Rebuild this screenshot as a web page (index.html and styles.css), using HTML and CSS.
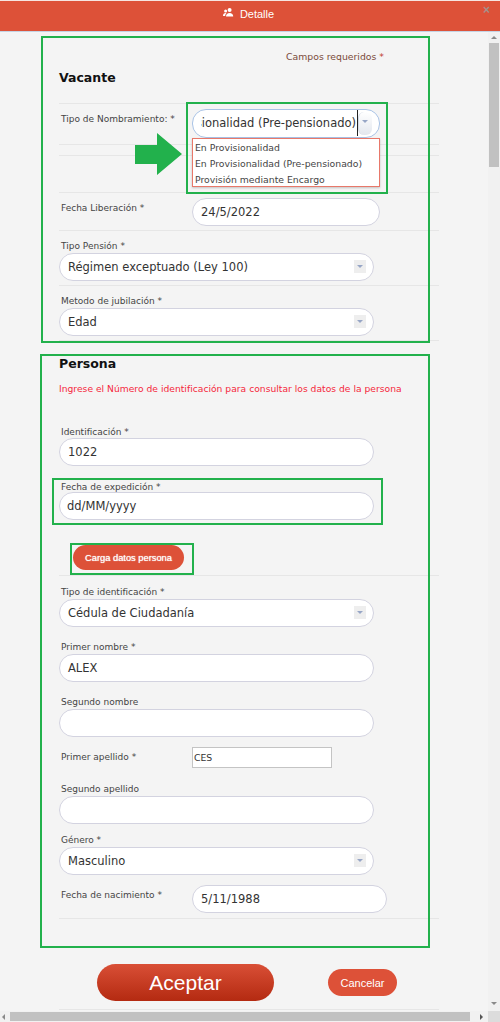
FILE: index.html
```html
<!DOCTYPE html>
<html lang="es">

<head>
    <meta charset="UTF-8">
    <title>Detalle</title>
    <link rel="stylesheet" href="styles.css">
</head>

<body>
    <header class="title-bar">
        <svg class="users-icon" width="12" height="9" viewBox="0 0 12 9">
            <circle cx="6.6" cy="2" r="2" fill="#fff" />
            <path d="M3 8.5c0-2.4 1.4-3.6 3.6-3.6s3.6 1.2 3.6 3.6z" fill="#fff" />
            <circle cx="2.6" cy="3" r="1.5" fill="#fff" />
            <path d="M0 8c0-2 .9-3 2.8-3l.6.2C2.500 6 2.200 7 2.200 8z" fill="#fff" />
        </svg>
        <span>Detalle</span>
        <span class="close-btn">&times;</span>
    </header>

    <div class="body-wrap">
        <main class="content">
            <section class="vacante">
                <p class="required-note">Campos requeridos <span>*</span></p>
                <h3>Vacante</h3>

                <div class="row row-first">
                    <label>Tipo de Nombramiento: *</label>
                    <div class="input input-short select-open">
                        <span class="clip-text"><span>En Provisionalidad (Pre-pensionado)</span></span>
                        <span class="select-btn select-btn-tall"></span>
                    </div>
                </div>
                <div class="row row-blank"></div>
                <div class="row row-hidden"></div>
                <div class="row row-date">
                    <label>Fecha Liberación *</label>
                    <div class="input input-short">24/5/2022</div>
                </div>
                <div class="row row-stack">
                    <label>Tipo Pensión *</label>
                    <div class="input">Régimen exceptuado (Ley 100)<span class="select-btn"></span></div>
                </div>
                <div class="row row-stack">
                    <label>Metodo de jubilación *</label>
                    <div class="input">Edad<span class="select-btn"></span></div>
                </div>
            </section>

            <section class="persona">
                <h3>Persona</h3>
                <p class="warning">Ingrese el Número de identificación para consultar los datos de la persona</p>

                <div class="field field-id">
                    <label>Identificación *</label>
                    <div class="input">1022</div>
                </div>
                <div class="field field-expedicion">
                    <label>Fecha de expedición *</label>
                    <div class="input input-tight">dd/MM/yyyy</div>
                </div>
                <button class="btn-load" type="button">Carga datos persona</button>

                <div class="row row-stack row-tipo">
                    <label>Tipo de identificación *</label>
                    <div class="input">Cédula de Ciudadanía<span class="select-btn"></span></div>
                </div>
                <div class="field">
                    <label>Primer nombre *</label>
                    <div class="input">ALEX</div>
                </div>
                <div class="field">
                    <label>Segundo nombre</label>
                    <div class="input"></div>
                </div>
                <div class="inline-field">
                    <label>Primer apellido *</label>
                    <div class="plain-input">CES</div>
                </div>
                <div class="field field-after-inline">
                    <label>Segundo apellido</label>
                    <div class="input"></div>
                </div>
                <div class="field field-genero">
                    <label>Género *</label>
                    <div class="input">Masculino<span class="select-btn"></span></div>
                </div>
                <div class="inline-field inline-birth">
                    <label>Fecha de nacimiento *</label>
                    <div class="input input-birth">5/11/1988</div>
                </div>
            </section>

            <div class="actions">
                <button class="btn-accept" type="button">Aceptar</button>
                <button class="btn-cancel" type="button">Cancelar</button>
            </div>
            <div class="last-line"></div>
        </main>

        <div class="v-scroll">
            <span class="arrow-up"></span>
            <span class="v-thumb"></span>
            <span class="arrow-down"></span>
        </div>
    </div>

    <div class="h-scroll">
        <span class="arrow-left"></span>
        <span class="h-thumb"></span>
        <span class="arrow-right"></span>
        <span class="corner"></span>
    </div>

    <!-- Dropdown opened over the form -->
    <ul class="dropdown">
        <li>En Provisionalidad</li>
        <li>En Provisionalidad (Pre-pensionado)</li>
        <li>Provisión mediante Encargo</li>
    </ul>

    <!-- Green annotations drawn over the screenshot -->
    <div class="mark mark-vacante"></div>
    <div class="mark mark-select"></div>
    <div class="mark mark-persona"></div>
    <div class="mark mark-fecha"></div>
    <div class="mark mark-load"></div>
    <svg class="mark-arrow" width="48" height="42" viewBox="0 0 48 42">
        <polygon points="0,12 22,12 22,0 47,21 22,42 22,31 0,31" fill="#22b14c" />
    </svg>
</body>

</html>
```

FILE: styles.css
```css
/* Page */
html,
body {
    margin: 0;
    height: 1022px;
    overflow: hidden;
}

body {
    position: relative;
    background-color: #f4f4f4;
    font-family: "DejaVu Sans", sans-serif;
    color: #333;
}

/* Title bar */
.title-bar {
    position: relative;
    height: 25px;
    padding-bottom: 5px;
    border-top: 1px solid #f6e4e0;
    border-bottom: 1px solid #c5d3e4;
    background-color: #dd5138;
    color: #fff;
    font-family: "Liberation Sans", sans-serif;
    font-size: 11px;
    display: flex;
    align-items: center;
    justify-content: center;
    gap: 5px;
}

.users-icon {
    margin-top: -3px;
    margin-left: -3px;
}

.close-btn {
    position: absolute;
    right: 10px;
    top: 2px;
    color: #a58f8a;
    font-size: 12px;
    font-weight: bold;
}

/* Layout */
.body-wrap {
    display: flex;
    height: 979px;
}

.content {
    width: 488px;
    box-sizing: border-box;
    padding-left: 59px;
    overflow: hidden;
}

.vacante,
.persona,
.last-line {
    width: 380px;
}

.vacante {
    border-bottom: 1px solid #e6e6e6;
}

.required-note {
    margin: 0;
    padding: 18px 55px 0 0;
    font-size: 9.300px;
    line-height: 14px;
    text-align: right;
    color: #7a4a3a;
}

.required-note span {
    color: #c0392b;
}

h3 {
    margin: 0;
    font-size: 12.500px;
    line-height: 18px;
    color: #111;
}

.vacante h3 {
    margin-top: 5px;
    margin-bottom: 16px;
}

.persona h3 {
    margin-top: 14px;
}

/* Rows */
.row {
    border-top: 1px solid #e6e6e6;
}

label {
    display: block;
    padding-top: 1px;
    font-size: 9px;
    line-height: 14px;
    color: #444;
}

.row-first {
    height: 40px;
    display: flex;
    padding-left: 2px;
}

.row-first label,
.row-date label {
    width: 131px;
    padding-top: 8px;
    flex: none;
}

.row-first .input {
    margin-top: 5px;
    height: 29px;
}

.row-blank {
    height: 10px;
}

.row-hidden {
    height: 36px;
}

.row-date {
    height: 37px;
    display: flex;
    padding-left: 2px;
}

.row-date .input {
    margin-top: 5px;
}

.row-stack {
    padding: 7px 0 4px;
}

.row-stack label,
.field label {
    padding-left: 2px;
}

.row-tipo {
    padding: 8px 0 0;
}

/* Inputs */
.input {
    position: relative;
    box-sizing: border-box;
    width: 315px;
    height: 28px;
    padding-left: 8px;
    background-color: #fff;
    border: 1px solid #d3d3e0;
    border-radius: 14px;
    font-size: 11.500px;
    line-height: 26px;
    color: #333;
}

.input-short {
    width: 188px;
}

.select-open {
    border-color: #a9c3e6;
}

.clip-text {
    display: flex;
    justify-content: flex-end;
    width: 157px;
    overflow: hidden;
    white-space: nowrap;
}

.clip-text span {
    flex: none;
    border-right: 1px solid #222;
    padding-right: 1px;
}

.input-tight {
    padding-left: 7px;
}

.select-btn {
    position: absolute;
    right: 7px;
    top: 6px;
    width: 12px;
    height: 13px;
    background-color: #eeeeee;
}

.select-btn::after {
    content: "";
    position: absolute;
    left: 3px;
    top: 5px;
    border-left: 3px solid transparent;
    border-right: 3px solid transparent;
    border-top: 3px solid #97a6c6;
}

.select-btn-tall {
    top: 2px;
    right: 7px;
    width: 14px;
    height: 23px;
    border-radius: 6px;
    background: linear-gradient(to bottom, #fff, #e3e7ee);
    border-left: 1px solid #d4dbe6;
    box-sizing: border-box;
}

.select-btn-tall::after {
    top: 8px;
    left: 3px;
}

.plain-input {
    box-sizing: border-box;
    width: 140px;
    height: 21px;
    padding-left: 1px;
    background-color: #fff;
    border: 1px solid #c4c4c4;
    font-size: 9.300px;
    line-height: 19px;
}

/* Persona fields */
.warning {
    margin: 9px 0 0;
    font-size: 9.200px;
    line-height: 14px;
    color: #f5283c;
}

.field {
    margin-top: 12px;
}

.field-id {
    margin-top: 28px;
}

.field-id label {
    margin-bottom: -1px;
}

.field-expedicion {
    margin-top: 13px;
}

.field-expedicion label {
    margin-bottom: -2px;
}

.field-after-inline {
    margin-top: 13px;
}

.field-genero {
    margin-top: 8px;
}

.inline-field {
    margin-top: 10px;
    display: flex;
    padding-left: 2px;
}

.inline-field label {
    width: 131px;
    flex: none;
    padding-top: 3px;
}

.inline-birth {
    height: 33px;
    border-bottom: 1px solid #e6e6e6;
}

.input-birth {
    width: 195px;
}

.btn-load {
    display: block;
    margin: 25px 0 5px 14px;
    width: 111px;
    height: 25px;
    border: none;
    border-radius: 13px;
    background-color: #dd5138;
    color: #fff;
    font-family: "Liberation Sans", sans-serif;
    font-size: 9.300px;
    text-shadow: 0 0 1px #fff;
    padding: 0;
}

/* Footer buttons */
.actions {
    display: flex;
    align-items: center;
    margin: 45px 0 0 38px;
    gap: 54px;
}

.btn-accept {
    width: 177px;
    height: 37px;
    border: none;
    border-radius: 19px;
    background: linear-gradient(to bottom, #d94f36, #b42a11);
    color: #fff;
    font-family: "Liberation Sans", sans-serif;
    font-size: 21px;
    padding: 0;
}

.btn-cancel {
    width: 69px;
    height: 27px;
    border: none;
    border-radius: 14px;
    background-color: #dd5138;
    color: #fff;
    font-family: "Liberation Sans", sans-serif;
    font-size: 11px;
    padding: 0;
}

.last-line {
    margin-top: 8px;
    border-top: 1px solid #e6e6e6;
}

/* Scrollbars */
.v-scroll {
    width: 12px;
    background-color: #f1f1f1;
    position: relative;
}

.v-thumb {
    position: absolute;
    left: 1px;
    top: 11px;
    width: 10px;
    height: 124px;
    background-color: #c1c1c1;
}

.arrow-up,
.arrow-down {
    position: absolute;
    left: 3px;
    border-left: 3px solid transparent;
    border-right: 3px solid transparent;
}

.arrow-up {
    top: 4px;
    border-bottom: 3px solid #8a8a8a;
}

.arrow-down {
    bottom: 6px;
    border-top: 3px solid #8a8a8a;
}

.h-scroll {
    position: relative;
    height: 11px;
    background-color: #f1f1f1;
}

.h-thumb {
    position: absolute;
    left: 10px;
    top: 1px;
    width: 460px;
    height: 9px;
    background-color: #c1c1c1;
}

.arrow-left,
.arrow-right {
    position: absolute;
    top: 3px;
    border-top: 3px solid transparent;
    border-bottom: 3px solid transparent;
}

.arrow-left {
    left: 2px;
    border-right: 3px solid #8a8a8a;
}

.arrow-right {
    left: 480px;
    border-left: 3px solid #555;
}

.corner {
    position: absolute;
    right: 0;
    top: 0;
    width: 12px;
    height: 11px;
    background-color: #dcdcdc;
}

/* Open dropdown */
.dropdown {
    position: absolute;
    left: 192px;
    top: 138px;
    box-sizing: border-box;
    width: 188px;
    height: 49px;
    margin: 0;
    padding: 1px 2px;
    list-style-type: none;
    background-color: #fff;
    border: 1px solid #e8786a;
    box-shadow: 0 1px 2px rgba(0, 0, 0, 0.2);
    font-size: 9.300px;
    line-height: 16px;
    color: #444;
    white-space: nowrap;
}

/* Annotations */
.mark {
    position: absolute;
    box-sizing: border-box;
    border: 2px solid #22b14c;
}

.mark-vacante {
    left: 41px;
    top: 36px;
    width: 389px;
    height: 307px;
}

.mark-select {
    left: 186px;
    top: 102px;
    width: 202px;
    height: 92px;
}

.mark-persona {
    left: 40px;
    top: 354px;
    width: 390px;
    height: 594px;
}

.mark-fecha {
    left: 52px;
    top: 478px;
    width: 331px;
    height: 47px;
}

.mark-load {
    left: 70px;
    top: 543px;
    width: 124px;
    height: 32px;
}

.mark-arrow {
    position: absolute;
    left: 135px;
    top: 133px;
}
```
